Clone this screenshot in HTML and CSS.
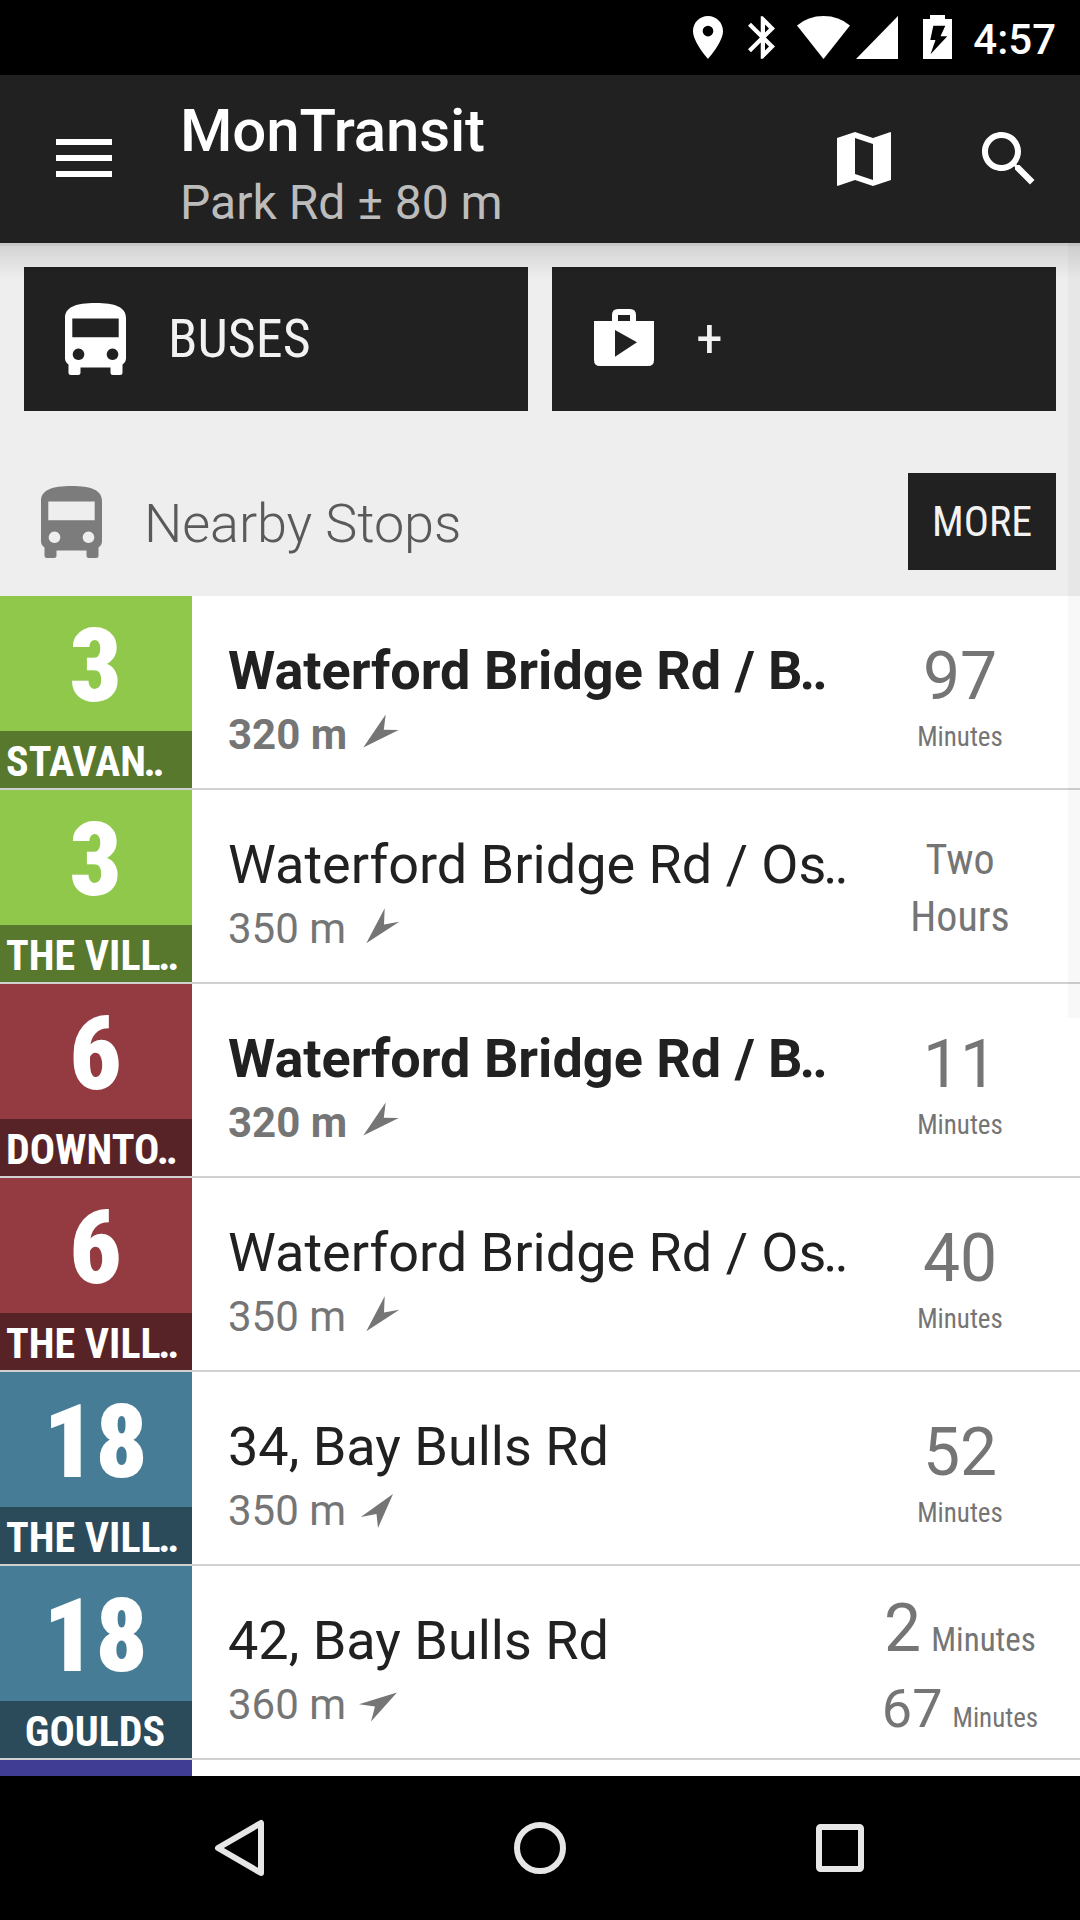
FILE: index.html
```html
<!DOCTYPE html>
<html lang="en">
<head>
<meta charset="utf-8">
<title>MonTransit</title>
<link rel="stylesheet" href="styles.css">
</head>
<body>
<svg class="defs" width="0" height="0" aria-hidden="true">
  <symbol id="bus" viewBox="0 0 61 72">
    <path fill-rule="evenodd" d="M0 15C0 4 11 0 30.500 0S61 4 61 15V55.500C61 58 59.500 60 57.500 61.500V69.500Q57.500 72 55 72H48Q45.500 72 45.500 69.500V64.500H15.500V69.500Q15.500 72 13 72H6Q3.500 72 3.500 69.500V61.500C1.500 60 0 58 0 55.500ZM7.300 15.500V34.300H53.700V15.500ZM13.500 45.500a5.800 5.800 0 1 0 .01 0ZM47.500 45.500a5.800 5.800 0 1 0 .01 0Z"/>
  </symbol>
  <symbol id="arrow-sw" viewBox="0 0 48 48"><path d="M9.300 40.600L31.700 7.500 29.800 22.800 44.700 23Z"/></symbol>
  <symbol id="arrow-ssw" viewBox="0 0 48 48"><path d="M12.300 42.300L30.700 7.300 30 23.500 45.300 20.700Z"/></symbol>
  <symbol id="arrow-nne" viewBox="0 0 48 48"><path d="M39 11L24 45 22.500 31 6.800 34Z"/></symbol>
  <symbol id="arrow-ne" viewBox="0 0 48 48"><path d="M43 15.500L17 44.500 21 29.500 5 27.300Z"/></symbol>
</svg>

<div class="statusbar">
  <svg class="pin" viewBox="5 2 14 20"><path fill-rule="evenodd" d="M12 2C8.130 2 5 5.130 5 9c0 5.250 7 13 7 13s7-7.750 7-13c0-3.870-3.130-7-7-7zm0 9.500a2.500 2.500 0 0 1 0-5 2.500 2.500 0 0 1 0 5z"/></svg>
  <svg class="bluetooth" viewBox="5 2 12.710 20"><path d="M17.710 7.710L12 2h-1v7.590L6.410 5 5 6.410 10.590 12 5 17.590 6.410 19 11 14.410V22h1l5.710-5.710-4.300-4.290 4.300-4.290zM13 5.830l1.880 1.880L13 9.590V5.830zm1.880 10.460L13 18.170v-3.760l1.880 1.880z"/></svg>
  <svg class="wifi" viewBox="0 0 53 43"><path d="M26.500 43L0 9.500Q11 0 26.500 0T53 9.500Z"/></svg>
  <svg class="signal" viewBox="0 0 42 43"><path d="M42 0V43H0Z"/></svg>
  <svg class="battery" viewBox="0 0 29 44"><path fill-rule="evenodd" d="M7 0H22V4H29V44H0V4H7ZM10.300 10.700L7.300 25H12.500L7.500 39.300 24.300 21.300H17.500L22.300 10.700Z"/></svg>
  <span class="clock">4:57</span>
</div>

<header class="appbar">
  <div class="menu"><i></i><i></i><i></i></div>
  <div class="titles">
    <h1>MonTransit</h1>
    <p>Park Rd ± 80 m</p>
  </div>
  <svg class="action" viewBox="0 0 24 24"><path fill-rule="evenodd" d="M3 5L9 3 15 5 20.600 3.050Q21 2.950 21 3.300V19L15 21 9 19 3.400 20.950Q3 21.050 3 20.700ZM9 5V17L15 19V7Z"/></svg>
  <svg class="action" viewBox="0 0 24 24"><path d="M15.500 14h-.79l-.28-.27C15.410 12.590 16 11.110 16 9.500 16 5.910 13.090 3 9.500 3S3 5.910 3 9.500 5.910 16 9.500 16c1.610 0 3.090-.59 4.230-1.570l.27.28v.79l5 4.990L20.490 19l-4.990-5zm-6 0C7.010 14 5 11.990 5 9.500S7.010 5 9.500 5 14 7.010 14 9.500 11.990 14 9.500 14z"/></svg>
</header>

<main class="content">
  <div class="tiles">
    <div class="tile"><span class="slot"><svg class="bus"><use href="#bus"/></svg></span><span class="cond">BUSES</span></div>
    <div class="tile"><span class="slot"><svg class="bag" viewBox="0 0 60 57"><path fill-rule="evenodd" d="M0 12H18V6Q18 0 24 0H36Q42 0 42 6V12H60V51Q60 57 54 57H6Q0 57 0 51ZM24 6V12H36V6ZM21 21V47.700L43 33.300Z"/></svg></span><span class="cond">+</span></div>
  </div>
  <div class="section">
    <span class="slot"><svg class="bus"><use href="#bus"/></svg></span>
    <h2>Nearby Stops</h2>
    <span class="more cond">MORE</span>
  </div>

  <div class="list">
    <div class="row green strong">
      <div class="route"><b class="cond">3</b><span class="cond">STAVAN<em>..</em></span></div>
      <div class="stop"><h3>Waterford Bridge Rd / B<em>..</em></h3><p>320 m<svg><use href="#arrow-sw"/></svg></p></div>
      <div class="time"><span class="num">97</span><span class="unit cond">Minutes</span></div>
    </div>
    <div class="row green">
      <div class="route"><b class="cond">3</b><span class="cond">THE VILL<em>..</em></span></div>
      <div class="stop"><h3>Waterford Bridge Rd / Os<em>..</em></h3><p>350 m<svg><use href="#arrow-ssw"/></svg></p></div>
      <div class="time words cond"><span>Two</span><span>Hours</span></div>
    </div>
    <div class="row red strong">
      <div class="route"><b class="cond">6</b><span class="cond">DOWNTO<em>..</em></span></div>
      <div class="stop"><h3>Waterford Bridge Rd / B<em>..</em></h3><p>320 m<svg><use href="#arrow-sw"/></svg></p></div>
      <div class="time"><span class="num">11</span><span class="unit cond">Minutes</span></div>
    </div>
    <div class="row red">
      <div class="route"><b class="cond">6</b><span class="cond">THE VILL<em>..</em></span></div>
      <div class="stop"><h3>Waterford Bridge Rd / Os<em>..</em></h3><p>350 m<svg><use href="#arrow-ssw"/></svg></p></div>
      <div class="time"><span class="num">40</span><span class="unit cond">Minutes</span></div>
    </div>
    <div class="row blue">
      <div class="route"><b class="cond">18</b><span class="cond">THE VILL<em>..</em></span></div>
      <div class="stop"><h3>34, Bay Bulls Rd</h3><p>350 m<svg><use href="#arrow-nne"/></svg></p></div>
      <div class="time"><span class="num">52</span><span class="unit cond">Minutes</span></div>
    </div>
    <div class="row blue">
      <div class="route"><b class="cond">18</b><span class="cond centered">GOULDS</span></div>
      <div class="stop"><h3>42, Bay Bulls Rd</h3><p>360 m<svg><use href="#arrow-ne"/></svg></p></div>
      <div class="time pair">
        <div class="first"><span class="num">2</span><span class="unit cond">Minutes</span></div>
        <div class="second"><span class="num">67</span><span class="unit cond">Minutes</span></div>
      </div>
    </div>
    <div class="row violet"><div class="route"></div></div>
  </div>
  <div class="shade"></div>
  <div class="scrollbar"></div>
</main>

<nav class="navbar">
  <svg viewBox="0 0 72 72"><path d="M14 36L57 11V61Z"/></svg>
  <svg viewBox="0 0 72 72"><circle cx="36" cy="36" r="23"/></svg>
  <svg viewBox="0 0 72 72"><rect x="15" y="15" width="42" height="42" rx="1.500"/></svg>
</nav>
</body>
</html>
```

FILE: styles.css
```css
* { box-sizing: border-box; margin: 0; padding: 0; }
body {
  width: 1080px;
  height: 1920px;
  overflow: hidden;
  display: flex;
  flex-direction: column;
  background: #000;
  font-family: Roboto, "Liberation Sans", sans-serif;
  font-weight: 400;
  color: #212121;
}
h1, h2, h3 { font-weight: 400; }
em { font-style: normal; }
svg { display: block; flex: none; }
.defs { position: absolute; }
.cond { font-family: "Roboto Condensed", Roboto, sans-serif; font-stretch: 75%; }

.statusbar {
  flex: none;
  height: 75px;
  display: flex;
  justify-content: flex-end;
  align-items: flex-start;
  padding: 16px 24px 0 0;
  color: #fff;
  fill: #fff;
}
.pin { width: 30px; height: 43px; margin-right: 25px; }
.bluetooth { width: 27px; height: 43px; margin-right: 22px; }
.wifi { width: 53px; height: 43px; margin-right: 6px; }
.signal { width: 42px; height: 43px; margin-right: 25px; }
.battery { width: 29px; height: 44px; margin: -1px 21px 0 0; }
.clock { font-size: 42px; line-height: 48px; font-weight: 500; }

.appbar {
  flex: none;
  height: 168px;
  display: flex;
  background: #212121;
  color: #fff;
  fill: #fff;
  padding: 0 35px 0 56px;
}
.menu { width: 56px; margin: 64px 68px 0 0; display: flex; flex-direction: column; gap: 10px; }
.menu i { height: 6px; background: #fff; }
.titles { flex: 1; padding-top: 21px; }
.titles h1 { font-size: 60px; line-height: 70px; font-weight: 500; letter-spacing: -.15px; }
.titles p { font-size: 48px; line-height: 56px; margin-top: 9px; color: #bcbcbc; }
.action { width: 72px; height: 72px; margin: 48px 0 0 73px; }

.content { position: relative; flex: none; height: 1533px; overflow: hidden; background: #eee; }
.slot { width: 144px; flex: none; display: flex; justify-content: center; }
.bus { width: 61px; height: 72px; margin-right: 2px; }
.bag { width: 60px; height: 57px; margin-top: -3px; }
.tiles { display: flex; gap: 24px; padding: 24px 24px 0; }
.tile {
  flex: 1;
  height: 144px;
  display: flex;
  align-items: center;
  background: #212121;
  color: #f2f2f2;
  fill: #fff;
  font-size: 54px;
  line-height: 64px;
}
.section { height: 185px; display: flex; align-items: center; padding: 37px 24px 0 0; fill: #7c7c7c; }
.section h2 { flex: 1; font-size: 54px; line-height: 64px; font-weight: 300; letter-spacing: -.1px; color: #5a5a5a; padding-top: 4px; }
.more {
  width: 148px;
  height: 97px;
  margin-top: -1px;
  background: #212121;
  color: #f2f2f2;
  font-size: 42px;
  line-height: 97px;
  text-align: center;
}

.list { background: #fff; }
.row { height: 194px; display: flex; border-bottom: 2px solid #d0d0d0; }
.route { width: 192px; flex: none; background: var(--c); color: #fff; font-weight: 700; text-align: center; }
.route b { display: block; height: 135px; font-size: 102px; line-height: 140px; padding-right: 1px; }
.route span { display: block; height: 57px; background: var(--d); font-size: 42px; line-height: 62px; text-align: left; padding-left: 6px; white-space: nowrap; }
.route .centered { text-align: center; padding: 0 2px 0 0; }
.route em { letter-spacing: -3.200px; margin-left: -2.500px; }
.green { --c: #8fc84a; --d: #57782d; }
.red { --c: #933b40; --d: #572326; }
.blue { --c: #477c97; --d: #2b4a5a; }
.violet { --c: #3f3e94; --d: #3f3e94; }

.stop { flex: 1; min-width: 0; padding: 43px 0 0 36px; white-space: nowrap; }
.stop h3 { font-size: 54px; line-height: 64px; }
.stop em { letter-spacing: -3px; margin-left: -3px; }
.stop p { display: flex; align-items: center; height: 50px; margin-top: 7px; font-size: 42px; line-height: 50px; color: #757575; }
.stop svg { width: 48px; height: 48px; margin: -8px 0 0 8px; fill: #757575; }
.strong h3, .strong p { font-weight: 700; }
.strong .stop svg { margin-left: 7px; }

.time { width: 240px; flex: none; padding-top: 42px; color: #757575; display: flex; flex-direction: column; align-items: center; }
.num { font-size: 66px; line-height: 78px; }
.unit { font-size: 27px; line-height: 32px; margin-top: 5px; }
.time.words { font-size: 42px; line-height: 57px; padding-top: 41px; }
.time.pair { padding-top: 24px; }
.pair > div { display: flex; align-items: baseline; gap: 10px; }
.first .unit { font-size: 33px; margin: 0; }
.second .num { font-size: 54px; line-height: 64px; margin-top: 9px; }

.shade {
  position: absolute;
  inset: 0 0 auto 0;
  height: 36px;
  background: linear-gradient(rgba(0,0,0,.16) 0 3px, rgba(0,0,0,.11) 3px, transparent);
}
.scrollbar { position: absolute; top: 0; right: 0; width: 12px; height: 775px; background: rgba(0,0,0,.027); }

.navbar {
  flex: 1;
  display: flex;
  justify-content: space-between;
  align-items: center;
  padding: 0 204px;
  fill: none;
  stroke: #e6e6e6;
  stroke-width: 6;
  stroke-linejoin: round;
}
.navbar svg { width: 72px; height: 72px; }
```
